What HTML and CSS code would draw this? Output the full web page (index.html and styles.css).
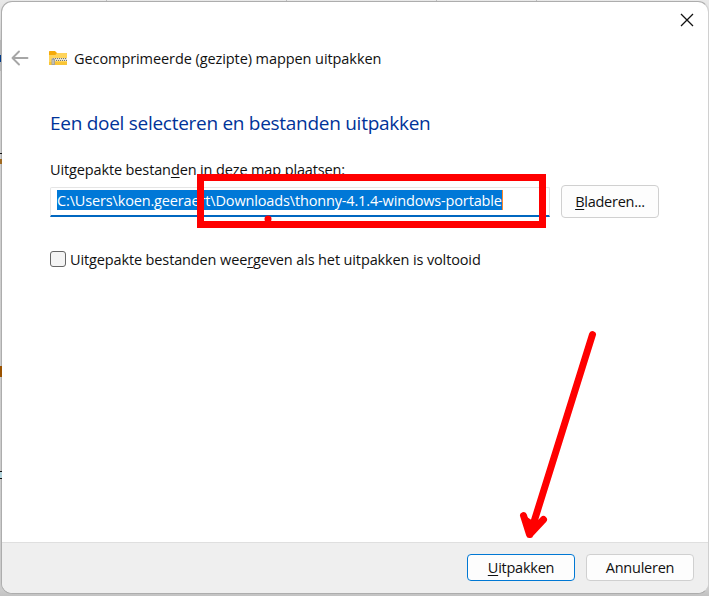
FILE: index.html
```html
<!DOCTYPE html>
<html lang="nl">
<head>
<meta charset="utf-8">
<title>Gecomprimeerde (gezipte) mappen uitpakken</title>
<link rel="stylesheet" href="styles.css">
</head>
<body>
<main class="dialog">
  <div class="titlebar">
    <svg class="close" width="14" height="14" viewBox="0 0 14 14"><path d="M1 1 13 13M13 1 1 13"/></svg>
  </div>
  <header class="header">
    <svg class="back" width="18" height="16" viewBox="0 0 18 16"><path d="M16.5 8H1.5M8 1.5 1.5 8 8 14.5"/></svg>
    <svg class="folder" width="18" height="14" viewBox="0 0 18 14">
      <path fill="#f5aa08" d="M0 .6Q0 0 .8 0H6l2 2H18V5H0z"/>
      <path fill="#ffd45a" d="M0 4H6.3L8 2H17.4Q18 2 18 2.7V13.4Q18 14 17.4 14H.6Q0 14 0 13.4z"/>
      <path fill="#f9c536" d="M0 11H18V13.4Q18 14 17.4 14H.6Q0 14 0 13.4z"/>
      <path fill="#e6e2d4" d="M3 7H18V10H3z"/>
      <path stroke="#77776f" stroke-dasharray="1 1" d="M4 7.5H18M5 9.5H18"/>
      <path fill="#a5a39b" d="M2.5 8 4 7 6 8V14H2.5z"/>
      <path fill="#d5d2c8" d="M3.5 9H4.6V13H3.5z"/>
    </svg>
    <span class="title">Gecomprimeerde (gezipte) mappen uitpakken</span>
  </header>
  <section class="content">
    <h1 class="heading"><span>Een doel selecteren en bestanden uitpakken</span></h1>
    <div class="label"><span>Uitgepakte bestan<u>d</u>en in deze map plaatsen:</span></div>
    <div class="row">
      <div class="input"><span class="selection">C:\Users\koen.geeraert\Downloads\thonny-4.1.4-windows-portable</span></div>
      <div class="button browse"><span><u>B</u>laderen...</span></div>
    </div>
    <div class="check"><i class="box"></i><span>Uitgepakte bestanden wee<u>r</u>geven als het uitpakken is voltooid</span></div>
  </section>
  <footer class="footer">
    <div class="button primary"><span><u>U</u>itpakken</span></div>
    <div class="button cancel"><span>Annuleren</span></div>
  </footer>
</main>
<div class="backdrop">
  <i class="tick tick-a"></i><i class="tick tick-b"></i><i class="tick tick-c"></i><i class="tick tick-d"></i>
  <i class="scrap scrap-grey"></i><i class="scrap scrap-blue"></i><i class="scrap scrap-line"></i><i class="scrap scrap-tan"></i><i class="scrap scrap-brown"></i><i class="scrap scrap-cyan"></i>
</div>
<svg class="annotation" width="709" height="596" viewBox="0 0 709 596">
  <rect x="200.5" y="177.5" width="342" height="47"/>
  <circle cx="268" cy="219" r="3.5"/>
  <path d="M592.5 334.5 530 534.5M523.5 515.5 529.5 534.5 543.5 519.5"/>
  <path class="tip" d="M524 515 529.5 535 543 520 533 521z"/>
</svg>
</body>
</html>
```
FILE: styles.css
```css
* { box-sizing: border-box; }
body {
  margin: 0;
  width: 709px;
  height: 596px;
  overflow: hidden;
  position: relative;
  padding: 1px 0 0 1px;
  background: linear-gradient(#e9e9e9 0, #d0d0d0 40px, #cbcbcb 590px, #c2c2c2 596px);
  font: 14.5px/20px "Open Sans", "Noto Sans", sans-serif;
  color: #111;
}
u { text-decoration-thickness: 1px; text-underline-offset: 2px; text-decoration-skip-ink: none; }
.backdrop { position: absolute; inset: 0; }
.tick { position: absolute; top: 0; width: 1px; height: 1px; background: #bdbdbd; }
.tick-a { left: 106px; }
.tick-b { left: 286px; }
.tick-c { left: 436px; }
.tick-d { left: 536px; }
.scrap { position: absolute; left: 0; width: 2px; }
.scrap-grey { top: 40px; height: 31px; width: 1px; background: #b5b5b5; }
.scrap-blue { top: 55px; height: 7px; width: 1px; background: #003a88; }
.scrap-line { top: 153px; height: 1px; background: #111; }
.scrap-tan { top: 159px; height: 5px; background: #a06a22; }
.scrap-brown { top: 366px; height: 11px; background: #9a5200; }
.scrap-cyan { top: 471px; height: 8px; border: solid #111; border-width: 1px 0; background: #b4d4dc; }
.dialog {
  position: relative;
  width: 708px;
  height: 593px;
  display: flex;
  flex-direction: column;
  border: 1px solid #adadad;
  border-right-color: #d0d0d0;
  border-radius: 11px;
  overflow: hidden;
  background: #fff;
}
.titlebar { display: flex; justify-content: flex-end; height: 42px; padding: 11px 14px 0 0; }
.close { fill: none; stroke: #111; stroke-width: 1.3; }
.header { display: flex; align-items: center; height: 28px; padding-left: 9px; }
.back { fill: none; stroke: #a6a6a6; stroke-width: 1.9; stroke-linecap: round; stroke-linejoin: round; }
.folder { margin-left: 20px; }
.title { margin-left: 7px; padding-top: 2px; white-space: nowrap; letter-spacing: -0.08px; }
.content { padding: 38px 0 0 48px; white-space: nowrap; flex: 1; }
.heading { margin: 0; height: 30px; font-size: 19px; line-height: 26px; font-weight: 400; color: #003399; letter-spacing: -0.28px; }
.label { height: 20px; margin-top: 20px; letter-spacing: -0.13px; }
.row { display: flex; align-items: center; gap: 11px; height: 33px; margin-top: 5px; }
.input {
  width: 500px;
  height: 30px;
  padding: 2px 0 0 6px;
  border: 1px solid #e5e5e5;
  border-bottom: 2px solid #0067c0;
  border-radius: 2px 2px 0 0;
}
.selection { display: block; width: 446px; height: 20px; line-height: 22px; background: #0078d7; color: #fff; border-right: 1px solid #ff8728; letter-spacing: -0.15px; }
.button {
  display: flex;
  align-items: center;
  justify-content: center;
  border: 1px solid #d0d0d0;
  border-radius: 4px;
  background: #fdfdfd;
  width: 108px;
  height: 27px;
  letter-spacing: -0.25px;
}
.browse { width: 98px; height: 33px; }
.check { display: flex; align-items: center; margin-top: 30px; height: 21px; gap: 4px; letter-spacing: -0.13px; }
.check span { padding-top: 2px; }
.box { width: 16px; height: 16px; border: 1px solid #666; border-radius: 3px; background: #f4f4f4; }
.footer {
  display: flex;
  gap: 11px;
  justify-content: flex-end;
  height: 51px;
  padding: 11px 14px 0 0;
  border-top: 1px solid #dfdfdf;
  background: #efefef;
}
.primary { border-color: #0078d4; }
.annotation { position: absolute; left: 0; top: 0; fill: none; stroke: #f00; stroke-width: 7; stroke-linecap: round; stroke-linejoin: round; }
.annotation rect { stroke-linejoin: miter; }
.annotation circle, .annotation .tip { fill: #f00; stroke: none; }
```
